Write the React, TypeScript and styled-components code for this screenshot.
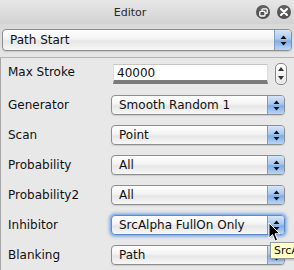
import React from "react";
import styled, { createGlobalStyle, css } from "styled-components";

const GlobalStyle = createGlobalStyle`
  html, body {
    margin: 0;
    padding: 0;
    background: #e8e8e8;
  }
  body {
    font-family: "DejaVu Sans", "Liberation Sans", sans-serif;
    font-size: 12px;
    color: #111;
  }
`;

const rows = [
  { label: "Generator", value: "Smooth Random 1" },
  { label: "Scan", value: "Point" },
  { label: "Probability", value: "All" },
  { label: "Probability2", value: "All" },
  { label: "Inhibitor", value: "SrcAlpha FullOn Only", focused: true },
  { label: "Blanking", value: "Path" },
];

const Arrows = () => (
  <svg width="7" height="11" viewBox="0 0 7 11">
    <path d="M3.5 0.5 L6.5 4 L0.5 4 Z" fill="#111" />
    <path d="M3.5 10.5 L6.5 7 L0.5 7 Z" fill="#111" />
  </svg>
);

const Popup = ({ value, focused, wide }: { value: string; focused?: boolean; wide?: boolean }) => (
  <PopupBox $focused={focused} $wide={wide}>
    <PopupText>{value}</PopupText>
    <ArrowCap>
      <Arrows />
    </ArrowCap>
  </PopupBox>
);

const App = () => {
  return (
    <>
      <GlobalStyle />
      <Window>
        <TitleBar>
          <Title>Editor</Title>
          <TitleButtons>
            <RoundButton>
              <svg width="9" height="9" viewBox="0 0 9 9">
                <rect x="3" y="0.8" width="5.2" height="4.6" rx="1" fill="none" stroke="#fff" strokeWidth="1.3" />
                <rect x="0.8" y="3.4" width="5.2" height="4.6" rx="1" fill="#555" stroke="#fff" strokeWidth="1.3" />
              </svg>
            </RoundButton>
            <RoundButton>
              <svg width="8" height="8" viewBox="0 0 8 8">
                <path d="M1 1 L7 7 M7 1 L1 7" stroke="#fff" strokeWidth="2" strokeLinecap="round" />
              </svg>
            </RoundButton>
          </TitleButtons>
        </TitleBar>

        <TopSection>
          <Popup value="Path Start" wide />
        </TopSection>

        <Panel>
          <FieldRow>
            <Label>Max Stroke</Label>
            <NumberField>40000</NumberField>
            <Stepper>
              <svg width="6" height="4" viewBox="0 0 6 4">
                <path d="M3 0 L6 4 L0 4 Z" fill="#333" />
              </svg>
              <svg width="6" height="4" viewBox="0 0 6 4">
                <path d="M3 4 L6 0 L0 0 Z" fill="#333" />
              </svg>
            </Stepper>
          </FieldRow>
          {rows.map((r) => (
            <Row key={r.label}>
              <Label>{r.label}</Label>
              <Popup value={r.value} focused={r.focused} />
            </Row>
          ))}
        </Panel>

        <Tooltip>SrcAlpha FullOn Only</Tooltip>
        <Cursor width="13" height="21" viewBox="0 0 13 21">
          <path
            d="M1 1 L1 16 L4.5 12.6 L7.2 19 L9.6 18 L7 11.8 L11.8 11.8 Z"
            fill="#000"
            stroke="#fff"
            strokeWidth="1"
            strokeLinejoin="round"
          />
        </Cursor>
      </Window>
    </>
  );
};

export default App;

const Window = styled.div`
  position: relative;
  width: 294px;
  height: 270px;
  overflow: hidden;
  background: #e8e8e8;
`;

const TitleBar = styled.div`
  height: 24px;
  display: flex;
  align-items: center;
  background: linear-gradient(#e7e7e7, #d2d2d2);
`;

const Title = styled.div`
  flex: 1;
  text-align: center;
  font-size: 11px;
  color: #2a2a2a;
  padding-top: 1px;
  padding-left: 4px;
`;

const TitleButtons = styled.div`
  display: flex;
  gap: 7px;
  padding-right: 3px;
`;

const RoundButton = styled.div`
  width: 14px;
  height: 14px;
  border-radius: 50%;
  background: radial-gradient(circle at 50% 35%, #6a6a6a, #454545);
  display: flex;
  align-items: center;
  justify-content: center;
`;

const TopSection = styled.div`
  padding: 5px 2px 6px 2px;
  background: linear-gradient(#d8d8d8, #e6e6e6);
  border-bottom: 1px solid #b4b4b4;
`;

const PopupBox = styled.div<{ $focused?: boolean; $wide?: boolean }>`
  box-sizing: border-box;
  display: flex;
  align-items: stretch;
  height: 20px;
  width: 174px;
  border: 1px solid #8e8e8e;
  border-radius: 4px;
  overflow: hidden;
  background: linear-gradient(#ffffff 0%, #f3f3f3 45%, #e6e6e6 55%, #f7f7f7 100%);
  box-shadow: 0 1px 1px rgba(0, 0, 0, 0.12);
  ${(p) =>
    p.$wide &&
    css`
      width: 290px;
      height: 22px;
    `}
  ${(p) =>
    p.$focused &&
    css`
      border-color: #5d8bc9;
      box-shadow: 0 0 0 1px #8db3e8, 0 0 3px 2px rgba(110, 160, 230, 0.75);
    `}
`;

const PopupText = styled.div`
  flex: 1;
  display: flex;
  align-items: center;
  padding-left: 7px;
  font-size: 12px;
  color: #111;
  white-space: nowrap;
`;

const ArrowCap = styled.div`
  width: 16px;
  display: flex;
  align-items: center;
  justify-content: center;
  border-left: 1px solid #7e9cc4;
  background: linear-gradient(#d6e6f8 0%, #a9c9ef 45%, #7eaee6 55%, #b8d6f6 100%);
`;

const Panel = styled.div`
  border-left: 1px solid #a6a6a6;
  display: flex;
  flex-direction: column;
`;

const Row = styled.div`
  height: 30px;
  display: grid;
  grid-template-columns: 110px 174px;
  align-items: center;
`;

const FieldRow = styled.div`
  height: 28px;
  margin-bottom: 4px;
  display: flex;
  align-items: center;
`;

const Label = styled.div`
  box-sizing: border-box;
  padding-left: 7px;
  font-size: 12px;
  color: #111;
  white-space: nowrap;
  width: 112px;
`;

const NumberField = styled.div`
  box-sizing: border-box;
  width: 155px;
  height: 20px;
  margin-top: 4px;
  padding: 1px 0 0 3px;
  background: #fff;
  border-top: 1px solid #c6c6c6;
  border-left: 1px solid #dcdcdc;
  border-right: 1px solid #dcdcdc;
  border-bottom: 4px solid #7b7b7b;
  font-size: 12px;
  color: #111;
`;

const Stepper = styled.div`
  box-sizing: border-box;
  width: 12px;
  height: 22px;
  margin-left: 7px;
  margin-top: 3px;
  border: 1px solid #8a8a8a;
  border-radius: 5px;
  background: linear-gradient(#fbfbfb, #e9e9e9);
  display: flex;
  flex-direction: column;
  align-items: center;
  justify-content: center;
  gap: 5px;
`;

const Tooltip = styled.div`
  position: absolute;
  left: 270px;
  top: 242px;
  padding: 1px 3px;
  background: #ffffc7;
  border: 1px solid #9a9a9a;
  font-size: 11px;
  color: #111;
  white-space: nowrap;
  box-shadow: 1px 1px 2px rgba(0, 0, 0, 0.25);
`;

const Cursor = styled.svg`
  position: absolute;
  left: 268px;
  top: 222px;
`;
